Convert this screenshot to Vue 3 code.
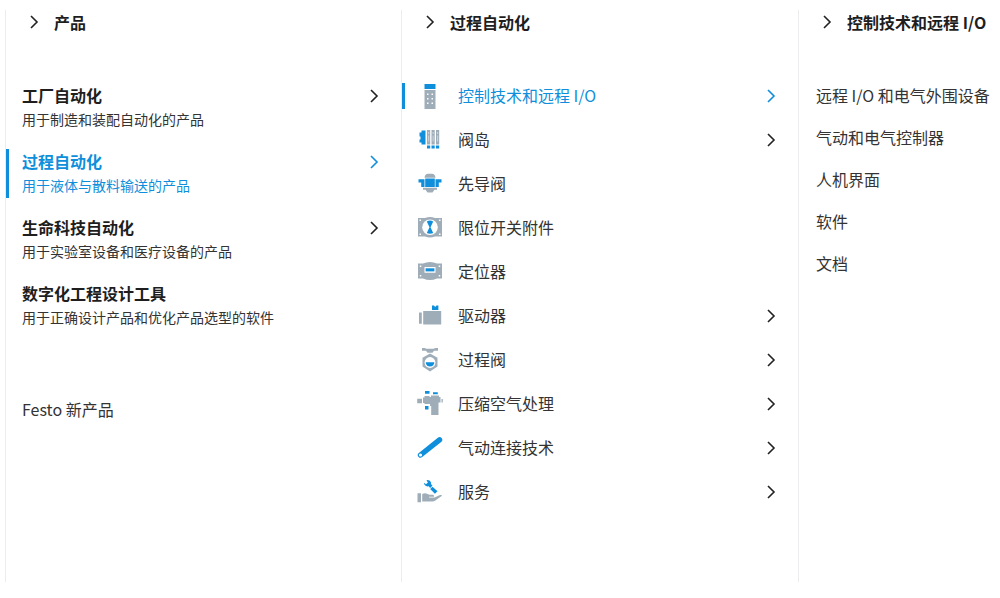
<script setup>
const areas = [
  { title: '工厂自动化', text: '用于制造和装配自动化的产品', more: true },
  { title: '过程自动化', text: '用于液体与散料输送的产品', more: true, active: true },
  { title: '生命科技自动化', text: '用于实验室设备和医疗设备的产品', more: true },
  { title: '数字化工程设计工具', text: '用于正确设计产品和优化产品选型的软件' }
]

const categories = [
  { icon: 'controller', title: '控制技术和远程 I/O', more: true, active: true },
  { icon: 'terminal', title: '阀岛', more: true },
  { icon: 'pilot', title: '先导阀' },
  { icon: 'limit', title: '限位开关附件' },
  { icon: 'positioner', title: '定位器' },
  { icon: 'actuator', title: '驱动器', more: true },
  { icon: 'valve', title: '过程阀', more: true },
  { icon: 'air', title: '压缩空气处理', more: true },
  { icon: 'tube', title: '气动连接技术', more: true },
  { icon: 'service', title: '服务', more: true }
]

const topics = ['远程 I/O 和电气外围设备', '气动和电气控制器', '人机界面', '软件', '文档']
</script>

<template>
  <nav class="menu" aria-label="产品">
    <section class="column">
      <button class="head" type="button">
        <svg class="chevron" viewBox="0 0 8 14" aria-hidden="true"><path d="M1 1l6 6-6 6" /></svg>
        <span>产品</span>
      </button>
      <ul class="areas">
        <li v-for="a in areas" :key="a.title">
          <a href="#" class="area" :class="{ active: a.active }">
            <span class="area-body">
              <strong>{{ a.title }}</strong>
              <small>{{ a.text }}</small>
            </span>
            <svg v-if="a.more" class="chevron" viewBox="0 0 8 14" aria-hidden="true"><path d="M1 1l6 6-6 6" /></svg>
          </a>
        </li>
      </ul>
      <a href="#" class="news">Festo 新产品</a>
    </section>

    <section class="column">
      <button class="head" type="button">
        <svg class="chevron" viewBox="0 0 8 14" aria-hidden="true"><path d="M1 1l6 6-6 6" /></svg>
        <span>过程自动化</span>
      </button>
      <ul class="categories">
        <li v-for="c in categories" :key="c.title">
          <a href="#" class="category" :class="{ active: c.active }">
            <svg class="icon" viewBox="0 0 26 26" aria-hidden="true">
              <g v-if="c.icon === 'controller'">
                <path class="b" d="M7.5 1h11v5h-11z" />
                <path class="g" d="M7.5 7h11v19h-11z" />
                <path class="w" d="M10 10.500h1.500V12H10zM14.500 10.500H16V12h-1.500zM10 15h1.500v1.500H10zM14.500 15H16v1.500h-1.500zM10 19.500h1.500V21H10zM14.500 19.500H16V21h-1.500z" />
              </g>
              <g v-else-if="c.icon === 'terminal'">
                <path class="b" d="M4.500 3.500H8.500v14H4.500v-2H2.500v-3h1v-3h-1v-4h2zM10 18.500h3.200v3H10zM14.500 18.500h3.200v3h-3.200zM19 18.500h3.200v3H19z" />
                <path class="g" d="M10 3h3.200v14.500H10zM14.500 3h3.200v14.500h-3.200zM19 3h3.200v14.500H19z" />
                <path class="w" d="M11.100 5h1v2h-1zM15.600 5h1v2h-1zM20.100 5h1v2h-1zM11.100 8.500h1v6h-1zM15.600 8.500h1v6h-1zM20.100 8.500h1v6h-1z" opacity=".5" />
              </g>
              <g v-else-if="c.icon === 'pilot'">
                <path class="g" d="M7.500 6.800Q8 3 11 2.800h4Q18 3 18.500 6.800zM6 16.800h14v2h-2.500l-2 2.700h-5l-2-2.700H6z" />
                <path class="b" d="M8.200 7.500h9.600v8.600H8.200zM1.500 8.300h6v7.700H4.200v-4.500H1.500zM24.500 8.300h-6v7.700h3.300v-4.500h2.700z" />
              </g>
              <g v-else-if="c.icon === 'limit'">
                <path class="g" d="M1 3h7Q13 1 18 3h7v18.500h-7Q13 23.500 8 21.500H1z" />
                <circle class="w" cx="13" cy="12.200" r="7.800" />
                <path class="b" d="M9.800 6.400q3.200-1.600 6.400 0L13.500 12.200l2.700 5.800q-3.200 1.600-6.400 0l2.700-5.800z" />
                <path class="w" d="M2.500 4.500H4V6H2.500zM22 4.500h1.500V6H22zM2.500 18.500H4V20H2.500zM22 18.500h1.500V20H22z" />
              </g>
              <g v-else-if="c.icon === 'positioner'">
                <path class="g" d="M1 4.500h5Q13 1.500 20 4.500h5v15h-5q-7 3-14 0H1z" />
                <path class="w" d="M7.500 8h11v5.800h-11zM2.800 6.500h1.500V8H2.800zM21.700 6.500h1.500V8h-1.500zM2.800 16h1.500v1.500H2.800zM21.700 16h1.500v1.500h-1.500z" />
                <path class="b" d="M8.600 9.300h8.800v3.100H8.600z" />
              </g>
              <g v-else-if="c.icon === 'actuator'">
                <path class="g" d="M2 9.500h2.800v11.200H2zM6.200 8h18v13.500h-18z" />
                <path class="b" d="M15 2.500h2l1.200 1.500 1.200-1.500h2V7H15z" />
              </g>
              <g v-else-if="c.icon === 'valve'">
                <path class="g" d="M5 1h3l1 .8h8L18 1h3v2.800h-4l-1.500 2h-5L9 3.800H5zM13 6.500l7.500 4.300v8.700L13 24.500l-7.500-5v-8.700z" />
                <circle class="w" cx="13" cy="15.500" r="5.400" />
                <path class="b" d="M8.700 15.300h8.600a4.300 4.300 0 0 1-8.600 0z" />
              </g>
              <g v-else-if="c.icon === 'air'">
                <path class="g" d="M.2 7.800H5v4.400H.2zM6 6.500h1.500V5h5v1h1.500V4.500h8V6h1.500v5.500h-2V24h-7.300v-9H13v-2H7.500v-1H6zM24.500 8h1.300v3.500h-1.300z" />
                <path class="b" d="M8 0h4.500v2.800H8zM16 1.300h4.800v2H16zM8 15h3.500v3.500H8z" />
              </g>
              <g v-else-if="c.icon === 'tube'">
                <path d="M3.500 20L22.500 4.800" fill="none" stroke="#0f8fdb" stroke-width="5.400" stroke-linecap="round" />
                <circle class="w" cx="3.500" cy="20" r="1.600" />
              </g>
              <g v-else>
                <path class="b" d="M9.500 1.200q3-.7 4.300 1.800.4 1 .1 2.100l1.600 1.500-2.300 2.300-1.500-1.600Q8.500 7.900 7.200 5.300L6.900 3.800l2 1.500 2-1.700z" />
                <path class="b" d="M15.500 7.800l5 4.500-2.600 2.500-4.700-4.800z" />
                <path class="g" d="M.5 14.300H4v9H.5zM5.200 15q3-1.500 5.300 0l2 .8h3.500q1.500.3 1 2H12v.8h5.500l5.500-2.600q2-.4 2 .8l-7 5q-1 .7-2.500.7H5.200z" />
              </g>
            </svg>
            <span class="label">{{ c.title }}</span>
            <svg v-if="c.more" class="chevron" viewBox="0 0 8 14" aria-hidden="true"><path d="M1 1l6 6-6 6" /></svg>
          </a>
        </li>
      </ul>
    </section>

    <section class="column">
      <button class="head" type="button">
        <svg class="chevron" viewBox="0 0 8 14" aria-hidden="true"><path d="M1 1l6 6-6 6" /></svg>
        <span>控制技术和远程 I/O</span>
      </button>
      <ul class="topics">
        <li v-for="t in topics" :key="t"><a href="#">{{ t }}</a></li>
      </ul>
    </section>
  </nav>
</template>

<style>
body {
  background: #fff;
}
</style>

<style scoped>
.menu {
  display: grid;
  grid-template-columns: 39.8% 39.9% minmax(0, 1fr);
  box-sizing: border-box;
  min-height: 100vh;
  padding: 10px 0 16px 5px;
  color: #333;
  font: 16px/24px "Noto Sans CJK SC", sans-serif;
  white-space: nowrap;
}

.column {
  border-left: 1px solid #ececee;
}

ul {
  display: flex;
  flex-direction: column;
  margin: 49px 0 0;
  padding: 0;
  list-style: none;
}

a {
  color: inherit;
  text-decoration: none;
}

.head {
  display: flex;
  align-items: center;
  gap: 16px;
  padding: 0 0 0 24px;
  border: 0;
  background: none;
  color: #1e1e1e;
  font: inherit;
  font-weight: 700;
  cursor: pointer;
}

.chevron {
  flex: none;
  width: 8px;
  height: 14px;
  overflow: visible;
  fill: none;
  stroke: #222;
  stroke-width: 1.6;
}

.active .chevron {
  stroke: #0f8fdb;
}

.area,
.category {
  position: relative;
  display: flex;
  padding-right: 23px;
}

.active {
  color: #0f8fdb;
}

.active::before {
  content: "";
  position: absolute;
  top: 0;
  bottom: 0;
  left: 0;
  width: 3px;
  background: #0f8fdb;
}

.areas {
  gap: 17px;
}

.area {
  padding-left: 16px;
}

.area .chevron {
  margin-top: 6px;
}

.area-body {
  display: flex;
  flex: 1;
  flex-direction: column;
  padding-bottom: 1px;
}

.area strong {
  color: #1e1e1e;
  font-weight: 700;
}

.area.active strong {
  color: inherit;
}

.area small {
  font-size: 14px;
}

.news {
  display: block;
  margin: 67px 0 0 16px;
}

.categories {
  gap: 18px;
}

.category {
  align-items: center;
  gap: 15px;
  padding-left: 15px;
}

.icon {
  flex: none;
  width: 26px;
  height: 26px;
}

.label {
  flex: 1;
  padding-bottom: 2px;
}

.b {
  fill: #0f8fdb;
}

.g {
  fill: #9fadb9;
}

.w {
  fill: #fff;
}

.topics {
  gap: 18px;
  padding-left: 17px;
}

.topics a {
  display: block;
}
</style>
